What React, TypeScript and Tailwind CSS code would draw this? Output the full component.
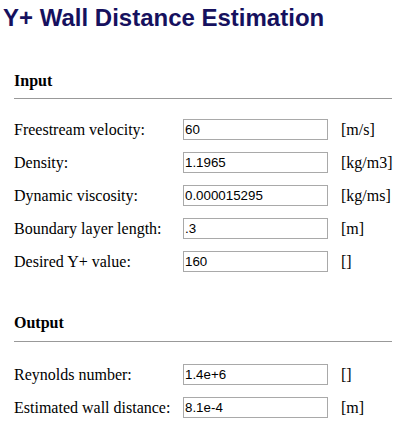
const inputs = [
  { label: "Freestream velocity:", value: "60", unit: "[m/s]" },
  { label: "Density:", value: "1.1965", unit: "[kg/m3]" },
  { label: "Dynamic viscosity:", value: "0.000015295", unit: "[kg/ms]" },
  { label: "Boundary layer length:", value: ".3", unit: "[m]" },
  { label: "Desired Y+ value:", value: "160", unit: "[]" },
];

const outputs = [
  { label: "Reynolds number:", value: "1.4e+6", unit: "[]" },
  { label: "Estimated wall distance:", value: "8.1e-4", unit: "[m]" },
];

type Row = { label: string; value: string; unit: string };

function FieldRows({ rows }: { rows: Row[] }) {
  return (
    <div className="flex flex-col gap-[12px]">
      {rows.map((r) => (
        <div key={r.label} className="grid h-[21px] grid-cols-[169px_145px_1fr] items-center">
          <span className="whitespace-nowrap leading-[21px]">{r.label}</span>
          <input
            readOnly
            defaultValue={r.value}
            className="h-[21px] w-[145px] border border-[#a9a9a9] bg-white px-[1px] font-['Liberation_Sans',Arial,sans-serif] text-[13.33px] text-black outline-none"
          />
          <span className="pl-[13px] leading-[21px]">{r.unit}</span>
        </div>
      ))}
    </div>
  );
}

export default function App() {
  return (
    <div className="h-[423px] w-[398px] overflow-hidden bg-white font-['Liberation_Serif',serif] text-[16px] text-black">
      <h1 className="pl-[3px] pt-[4px] font-['Liberation_Sans',Arial,sans-serif] text-[24px] font-bold leading-[28px] text-[#16115e]">
        Y+ Wall Distance Estimation
      </h1>

      <div className="pl-[14px] pr-[6px]">
        <h3 className="mt-[39px] text-[16px] font-bold leading-[20px]">Input</h3>
        <div className="mt-[7px] h-px bg-[#999999]" />
        <div className="mt-[20px]">
          <FieldRows rows={inputs} />
        </div>

        <h3 className="mt-[41px] text-[16px] font-bold leading-[20px]">Output</h3>
        <div className="mt-[8px] h-px bg-[#999999]" />
        <div className="mt-[22px]">
          <FieldRows rows={outputs} />
        </div>
      </div>
    </div>
  );
}
